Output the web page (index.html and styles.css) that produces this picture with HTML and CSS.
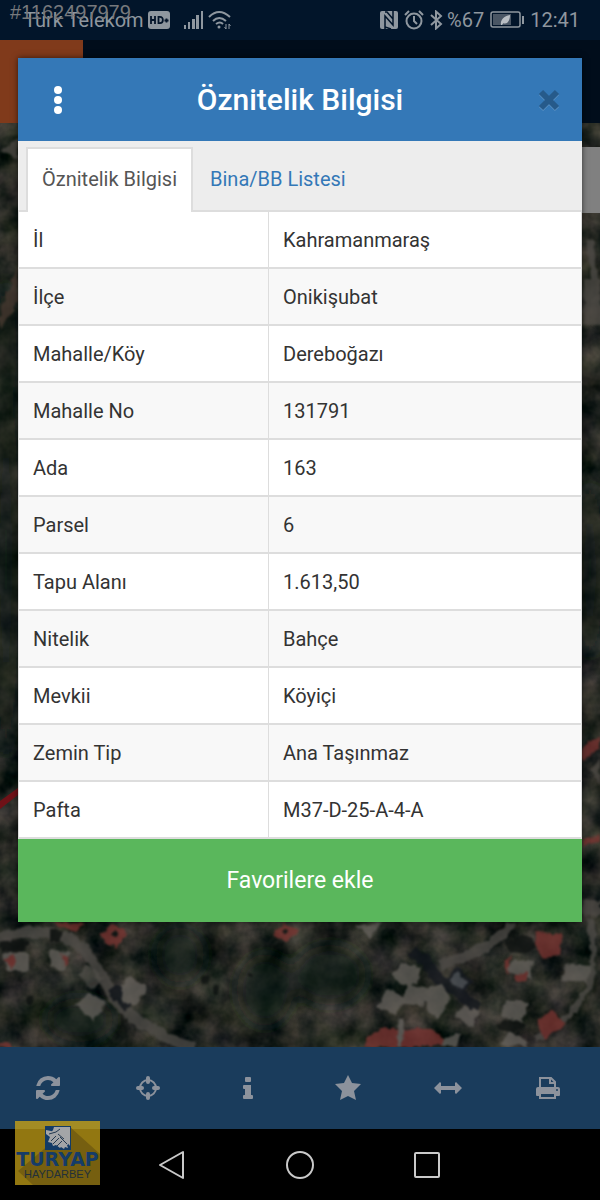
FILE: index.html
```html
<!DOCTYPE html>
<html lang="tr">
<head>
    <meta charset="UTF-8">
    <meta name="viewport" content="width=device-width, initial-scale=1.0">
    <title>Öznitelik Bilgisi</title>
    <link rel="stylesheet" href="styles.css">
</head>
<body>
    <header class="status-bar">
        <span class="listing-no">#1162497979</span>
        <div class="status-left">
            <span class="carrier">Türk Telekom</span>
            <svg class="icon-hd" width="22" height="18" viewBox="0 0 22 18">
                <rect width="22" height="18" rx="3" fill="#8f979f"/>
                <path d="M3 5v8M3 9h4M7 5v8M10.500 5.800v6.400h1.500c3.800 0 3.800-6.400 0-6.400zM16.500 9.500h4M18.500 7.500v4" fill="none" stroke="#04152a" stroke-width="1.800"/>
            </svg>
            <svg class="icon-signal" width="20" height="18" viewBox="0 0 20 18" fill="#8f979f">
                <rect x="0" y="14" width="2" height="4"/>
                <rect x="4" y="11" width="2" height="7"/>
                <rect x="8" y="8" width="3" height="10"/>
                <rect x="12" y="4" width="3" height="14"/>
                <rect x="17" y="0" width="2" height="18"/>
            </svg>
            <svg class="icon-wifi" width="24" height="20" viewBox="0 0 24 20" fill="none" stroke="#8f979f" stroke-width="2">
                <path d="M1 7Q11-3 22 7M5 11q6-6 13 0M8 14q4-3 7 0"/>
                <circle cx="11" cy="17" r="1.500" fill="#8f979f" stroke="none"/>
                <path d="M18 14v5M21 14v5M16.500 17l1.500 2M22.500 16L21 14" stroke-width="1"/>
            </svg>
        </div>
        <div class="status-right">
            <svg width="18" height="18" viewBox="0 0 18 18">
                <rect width="18" height="18" rx="2" fill="#8f979f"/>
                <path d="M5 18V5l8 9V0M5 1l2 0 6 7M5 10v6l6 2" fill="none" stroke="#02152a" stroke-width="1.500"/>
            </svg>
            <svg width="20" height="20" viewBox="0 0 20 20" fill="none" stroke="#8f979f" stroke-width="2">
                <circle cx="10" cy="11" r="7.500"/>
                <path d="M10 6v5l3 3M1 5l4-4M19 5l-4-4"/>
            </svg>
            <svg width="13" height="20" viewBox="0 0 13 20" fill="none" stroke="#8f979f" stroke-width="2">
                <path d="M1 5l10 9-5 4.500v-17L11 6 1 15"/>
            </svg>
            <span class="percent">%67</span>
            <svg class="icon-battery" width="34" height="18" viewBox="0 0 34 18">
                <rect x="1" y="1" width="29" height="15" rx="2" fill="none" stroke="#8f979f" stroke-width="1.500"/>
                <rect x="3" y="3" width="18" height="11" fill="#4a5664"/>
                <rect x="32" y="5" width="2" height="8" fill="#8f979f"/>
                <path d="M11 14c-1-5 3-9 9-10 0 6-3 10-7 8l4-5-5 7z" fill="#b9bec3"/>
            </svg>
            <span>12:41</span>
        </div>
    </header>

    <main class="stage">
        <svg class="map" viewBox="0 40 600 1007" preserveAspectRatio="xMidYMin slice" aria-hidden="true">
            <defs>
                <filter id="ground" x="0" y="0" width="100%" height="100%" color-interpolation-filters="sRGB">
                    <feTurbulence type="fractalNoise" baseFrequency="0.035" numOctaves="4" seed="8"/>
                    <feColorMatrix values="0.450 0 0 0 -0.080  0.360 0.050 0 0 -0.050  0.320 0 0.050 0 -0.050  0 0 0 0 1"/>
                </filter>
                <filter id="rough" x="-5%" y="-5%" width="110%" height="110%" color-interpolation-filters="sRGB">
                    <feTurbulence type="fractalNoise" baseFrequency="0.120" numOctaves="2" seed="3"/>
                    <feDisplacementMap in="SourceGraphic" scale="7" xChannelSelector="R" yChannelSelector="G"/>
                    <feGaussianBlur stdDeviation="0.800"/>
                </filter>
                <filter id="soft" x="-20%" y="-20%" width="140%" height="140%">
                    <feGaussianBlur stdDeviation="9"/>
                </filter>
            </defs>
            <rect y="40" width="600" height="1007" filter="url(#ground)"/>
            <!-- trees -->
            <g fill="#101c15" opacity=".6" filter="url(#soft)">
                <ellipse cx="80" cy="1020" rx="34" ry="22"/>
                <ellipse cx="180" cy="955" rx="24" ry="28"/>
                <ellipse cx="265" cy="990" rx="28" ry="36"/>
                <ellipse cx="330" cy="975" rx="36" ry="30"/>
                <ellipse cx="6" cy="350" rx="10" ry="70"/>
                <ellipse cx="6" cy="560" rx="12" ry="200"/>
                <ellipse cx="590" cy="570" rx="12" ry="90"/>
            </g>
            <g filter="url(#rough)" opacity=".75">
                <!-- roads -->
                <g fill="none" stroke="#504d49">
                    <path d="M-5 940q20-10 45-7 35 0 50 25 15 20 20 35 18 25 45 37 15 12 40 18" stroke-width="11"/>
                    <path d="M440 965q35-10 50-22 15-8 22-20" stroke-width="10"/>
                    <path d="M590 920q10 60-10 80-15 25-45 40" stroke-width="6"/>
                    <path d="M590 240l10 85" stroke-width="7"/>
                </g>
                <path d="M0 313l18-50v38L0 330z" fill="#493a31"/>
                <path d="M412 950l14 12 14 18 20 14 18 14M112 989l16 18" stroke="#11151c" stroke-width="11" fill="none"/>
                <!-- buildings -->
                <g fill="#66625d">
                    <path d="M120 988l10-12 17 12-10 17-15-3zM74 1004l15-11 19 10-15 18zM50 949l20 5-4 17-16-4zM3 953h27v18H8z"/>
                    <path d="M392 973l10-9 19 3-4 17-16 2zM376 1007l12-18 14 7 6-12 20 6-4 16-22-2-6 10zM421 990l20-6 10 14-14 21-9-10zM453 1016l12-10 15 4-8 18z"/>
                    <path d="M505 1000l24 2-7 20-20-5zM500 1045l10-15 16 10v7zM506 972l8-13 20 3-5 16zM560 980l6-16 26 2-5 16zM356 926l25-3-11 14zM440 1040l22-8-6 15h-20z"/>
                    <path d="M77 975l8-9 11 4 8 11-14 7z" opacity=".7"/>
                </g>
                <path d="M448 980l9-12 14 14-10 10z" fill="#51555c" stroke="#161a22" stroke-width="3"/>
                <g fill="#7c3431">
                    <path d="M100 936l12-13 16 10-12 16zM274 933l11-10 14 8-12 12zM534 944l3-12 27 2-4 22-18 2zM536 1022l16-12 13 15-21 14zM379 1028l55 2 11 9-3 8h-78l3-8zM5 960l9-6v16zM60 953l10 6-5 8zM504 963l8-8-5 20zM515 975l12-3v9l-9 1zM582 746l18-10v12l-18 14zM582 840l18-6v8l-18 4zM50 923h35l-8 9zM0 1043l12 0v5H0z"/>
                </g>
                <path d="M402 1018l-3 29" stroke="#6b6763" stroke-width="5"/>
                <g fill="#4f4b46">
                    <path d="M582 195h14v14h-14zM584 280h16v45h-16zM590 770l10-10v25zM582 900h18v15h-18zM0 150l18-12v22z"/>
                </g>
                <!-- tree shadows -->
                <g fill="#0c100f">
                    <circle cx="115" cy="934" r="3"/><circle cx="285" cy="930" r="3"/>
                    <circle cx="205" cy="980" r="4"/><circle cx="216" cy="990" r="4"/><circle cx="200" cy="1012" r="3"/>
                    <circle cx="20" cy="980" r="3"/><circle cx="30" cy="1000" r="3"/><circle cx="250" cy="975" r="3"/>
                    <ellipse cx="520" cy="945" rx="14" ry="9"/><ellipse cx="512" cy="1026" rx="14" ry="6"/>
                    <path d="M50 930h14l-4 12H50zM0 941h28l-3 10H2z"/>
                </g>
            </g>
            <path d="M0 809l18-14v-7L0 801z" fill="#6f1117"/>
        </svg>
        <div class="app-header"><span class="app-badge"></span></div>
        <div class="map-panel"></div>

        <section class="modal" role="dialog" aria-labelledby="modalTitle">
            <div class="modal-header">
                <button class="icon-btn" type="button" aria-label="Menü">
                    <svg width="26" height="30" viewBox="0 0 26 30" fill="#fff">
                        <circle cx="13" cy="5" r="4"/><circle cx="13" cy="15" r="4"/><circle cx="13" cy="25" r="4"/>
                    </svg>
                </button>
                <h1 class="modal-title" id="modalTitle">Öznitelik Bilgisi</h1>
                <button class="icon-btn close-btn" type="button" aria-label="Kapat">
                    <svg width="26" height="26" viewBox="0 0 26 26" fill="none">
                        <path d="M5 6l16 16M21 6L5 22" stroke="#5d92c2" stroke-width="6"/>
                        <path d="M5 5l16 16M21 5L5 21" stroke="#265a8a" stroke-width="6"/>
                    </svg>
                </button>
            </div>

            <nav class="tabs">
                <a class="tab active" href="#oznitelik">Öznitelik Bilgisi</a>
                <a class="tab" href="#bina">Bina/BB Listesi</a>
            </nav>

            <table class="info-table" id="oznitelik">
                <tbody>
                    <tr><th scope="row">İl</th><td>Kahramanmaraş</td></tr>
                    <tr><th scope="row">İlçe</th><td>Onikişubat</td></tr>
                    <tr><th scope="row">Mahalle/Köy</th><td>Dereboğazı</td></tr>
                    <tr><th scope="row">Mahalle No</th><td>131791</td></tr>
                    <tr><th scope="row">Ada</th><td>163</td></tr>
                    <tr><th scope="row">Parsel</th><td>6</td></tr>
                    <tr><th scope="row">Tapu Alanı</th><td>1.613,50</td></tr>
                    <tr><th scope="row">Nitelik</th><td>Bahçe</td></tr>
                    <tr><th scope="row">Mevkii</th><td>Köyiçi</td></tr>
                    <tr><th scope="row">Zemin Tip</th><td>Ana Taşınmaz</td></tr>
                    <tr><th scope="row">Pafta</th><td>M37-D-25-A-4-A</td></tr>
                </tbody>
            </table>

            <button class="favorite-btn" type="button">Favorilere ekle</button>
        </section>
    </main>

    <nav class="toolbar">
        <button class="tool-btn" type="button" aria-label="Yenile">
            <svg width="24" height="24" viewBox="0 0 1536 1536" fill="#8c929c"><path d="M1511 928q0 5-1 7-64 268-268 434.500T764 1536q-146 0-282.500-55T238 1324l-129 129q-19 19-45 19t-45-19-19-45V960q0-26 19-45t45-19h448q26 0 45 19t19 45-19 45l-137 137q71 66 161 102t187 36q134 0 250-65t186-179q11-17 53-117 8-23 30-23h192q13 0 22.500 9.500t9.500 22.500zm25-800v448q0 26-19 45t-45 19h-448q-26 0-45-19t-19-45 19-45l138-138Q969 256 768 256q-134 0-250 65T332 500q-11 17-53 117-8 23-30 23H50q-13 0-22.500-9.500T18 608v-7q65-268 270-434.500T768 0q146 0 284 55.500T1297 212l130-129q19-19 45-19t45 19 19 45z"/></svg>
        </button>
        <button class="tool-btn" type="button" aria-label="Konum">
            <svg width="24" height="24" viewBox="0 0 24 24" fill="none" stroke="#8c929c">
                <circle cx="12" cy="12" r="8" stroke-width="2"/>
                <path d="M12 2v4M12 18v4M2 12h4M18 12h4" stroke-width="4" stroke-linecap="round"/>
            </svg>
        </button>
        <button class="tool-btn" type="button" aria-label="Bilgi">
            <svg width="24" height="24" viewBox="0 0 24 24" fill="#8c929c">
                <rect x="9" y="1" width="6" height="5" rx="1"/>
                <path d="M8 9h7v10h1q1 0 1 1v2q0 1-1 1H8q-1 0-1-1v-2q0-1 1-1h1v-6H8q-1 0-1-1v-2q0-1 1-1z"/>
            </svg>
        </button>
        <button class="tool-btn" type="button" aria-label="Favoriler">
            <svg width="26" height="26" viewBox="0 0 26 26" fill="#8c929c">
                <path d="M13 0l4 8 9 1-7 7 2 9-8-4-8 4 2-9-7-7 9-1z"/>
            </svg>
        </button>
        <button class="tool-btn" type="button" aria-label="Ölç">
            <svg width="28" height="24" viewBox="0 0 28 24" fill="#8c929c">
                <path d="M0 12l6-6 1 1v3h14V7l1-1 6 6-6 6-1-1v-3H7v3l-1 1z"/>
            </svg>
        </button>
        <button class="tool-btn" type="button" aria-label="Yazdır">
            <svg width="26" height="24" viewBox="0 0 26 24">
                <path d="M5 12V2h11l4 4v6" fill="none" stroke="#8c929c" stroke-width="2"/>
                <path d="M15 2v5h5" fill="none" stroke="#8c929c" stroke-width="2"/>
                <path d="M3 11h20q2 0 2 2v6q0 1-1 1h-3v3H4v-3H2q-1 0-1-1v-6q0-2 2-2zm3 7v3h13v-3z" fill="#8c929c" fill-rule="evenodd"/>
                <circle cx="22" cy="14" r="1" fill="#1a3c5c"/>
            </svg>
        </button>
    </nav>

    <footer class="nav-bar">
        <div class="agency">
            <svg class="agency-shade" viewBox="0 0 85 64" preserveAspectRatio="none" aria-hidden="true">
                <rect width="85" height="64" fill="#927711"/>
                <rect width="85" height="8" fill="#a38c24"/>
                <path d="M55 6l30 27v31H18L3 50z" fill="#765f10"/>
            </svg>
            <svg class="agency-logo" width="26" height="24" viewBox="0 0 26 24" aria-hidden="true">
                <rect width="26" height="24" fill="#133b66"/>
                <path d="M9 1h16v19l-5-7-9-6-7 2 4-5z" fill="#a3a5a7"/>
                <path d="M1 4l5 1 6 2 6 1 4 5 2 5-2 1 1 3-3-1-1 2-3-2-1 1-4-3-3 1-1-3-4-1 2-5-4-3z" fill="#a3a5a7"/>
                <path d="M4 8l7-2 4-3M6 15l5-5M8 18l6-6M12 20l5-5M15 11l7 7M13 8l6 5" stroke="#24394f" fill="none"/>
            </svg>
            <span class="agency-name">TURYAP</span>
            <span class="agency-office">HAYDARBEY</span>
        </div>
        <div class="nav-keys">
            <button class="nav-btn" type="button" aria-label="Geri">
                <svg width="28" height="30" viewBox="0 0 28 30" fill="none" stroke="#c9c9c9" stroke-width="2" stroke-linejoin="round"><path d="M24 2v26L1 15z"/></svg>
            </button>
            <button class="nav-btn" type="button" aria-label="Ana ekran">
                <svg width="30" height="30" viewBox="0 0 30 30" fill="none" stroke="#c9c9c9" stroke-width="2"><circle cx="15" cy="15" r="13"/></svg>
            </button>
            <button class="nav-btn" type="button" aria-label="Son uygulamalar">
                <svg width="28" height="28" viewBox="0 0 28 28" fill="none" stroke="#c9c9c9" stroke-width="2"><rect x="2" y="2" width="24" height="24" rx="1"/></svg>
            </button>
        </div>
    </footer>
</body>
</html>
```
FILE: styles.css
```css
* { margin: 0; padding: 0; box-sizing: border-box; }

body {
    display: flex;
    flex-direction: column;
    min-height: 100vh;
    font-family: Roboto, "Noto Sans", sans-serif;
    font-size: 20px;
    color: #333;
    background: #000;
}

button {
    border: none;
    background: none;
    font-family: inherit;
    cursor: pointer;
}

svg {
    display: block;
    flex: none;
}

/* status bar */
.status-bar {
    position: relative;
    display: flex;
    justify-content: space-between;
    align-items: center;
    height: 40px;
    padding: 0 20px 0 24px;
    background: #02152a;
    color: #8f979f;
}

.listing-no {
    position: absolute;
    left: 10px;
    top: 2px;
    font-family: "Liberation Sans", Arial, sans-serif;
    font-size: 20px;
    line-height: 20px;
    color: #77797c;
}

.status-left,
.status-right {
    display: flex;
    align-items: center;
}

.status-left {
    gap: 4px;
}

.icon-signal {
    margin-left: 10px;
}

.status-right {
    gap: 6px;
}

.percent {
    margin-left: -2px;
}

/* map and header behind the dialog */
.stage {
    position: relative;
    flex: 1;
    padding: 18px 18px 124px;
    overflow: hidden;
}

.map {
    position: absolute;
    inset: 0;
    width: 100%;
    height: 100%;
}

.app-header {
    position: absolute;
    top: 0;
    left: 0;
    right: 0;
    height: 83px;
    background: #010d1b;
}

.app-badge {
    display: block;
    width: 83px;
    height: 100%;
    background: #803a1b;
}

.map-panel {
    position: absolute;
    top: 107px;
    right: 0;
    width: 40px;
    height: 66px;
    background: #808080;
}

/* dialog */
.modal {
    position: relative;
    background: #fff;
    box-shadow: 0 0 6px rgba(0, 0, 0, 0.6);
}

.modal-header {
    display: flex;
    align-items: center;
    height: 83px;
    background: #3478b7;
}

.icon-btn {
    display: flex;
    justify-content: center;
    width: 80px;
}

.close-btn {
    justify-content: flex-end;
    padding-right: 20px;
}

.modal-title {
    flex: 1;
    font-size: 30px;
    font-weight: 500;
    text-align: center;
    color: #fff;
}

.tabs {
    display: flex;
    height: 71px;
    padding: 6px 8px 0;
    background: #ededed;
    border-bottom: 2px solid #ddd;
}

.tab {
    display: flex;
    align-items: center;
    height: 65px;
    padding: 0 14px 4px;
    border: 2px solid transparent;
    border-bottom: none;
    color: #3478b7;
    text-decoration: none;
}

.tab + .tab {
    margin-left: 1px;
}

.tab.active {
    background: #fff;
    border-color: #ddd;
    color: #555;
}

.info-table {
    width: 100%;
    table-layout: fixed;
    border-collapse: separate;
    border-spacing: 0;
    border-right: 1px solid #ddd;
}

.info-table th,
.info-table td {
    height: 57px;
    padding: 0 14px;
    border-bottom: 2px solid #ddd;
    border-left: 1px solid #ddd;
    font-weight: 400;
    text-align: left;
}

.info-table th {
    width: 250px;
}

.info-table tr:nth-child(even) {
    background: #f8f8f8;
}

.favorite-btn {
    display: block;
    width: 100%;
    height: 83px;
    background: #5ab75c;
    color: #fff;
    font-size: 23px;
}

/* toolbar */
.toolbar {
    display: grid;
    grid-template-columns: repeat(6, 1fr);
    height: 82px;
    background: #1a3c5c;
}

.tool-btn {
    display: flex;
    justify-content: center;
    align-items: center;
    padding-right: 4px;
}

/* phone navigation */
.nav-bar {
    position: relative;
    height: 71px;
    background: #000;
}

.nav-keys {
    display: flex;
    justify-content: center;
    align-items: center;
    gap: 98px;
    height: 100%;
}

.nav-btn {
    display: flex;
}

.agency {
    position: absolute;
    left: 15px;
    top: -8px;
    display: flex;
    flex-direction: column;
    align-items: center;
    width: 85px;
    height: 64px;
    padding-top: 5px;
    color: #153c68;
}

.agency-shade {
    position: absolute;
    inset: 0;
    width: 100%;
    height: 100%;
}

.agency-logo,
.agency-name,
.agency-office {
    position: relative;
}

.agency-name {
    font-family: "DejaVu Sans", Verdana, sans-serif;
    font-size: 19px;
    font-weight: 700;
    line-height: 18px;
}

.agency-office {
    font-family: "Liberation Sans", Arial, sans-serif;
    font-size: 11px;
    line-height: 12px;
    color: #22303a;
}
```
